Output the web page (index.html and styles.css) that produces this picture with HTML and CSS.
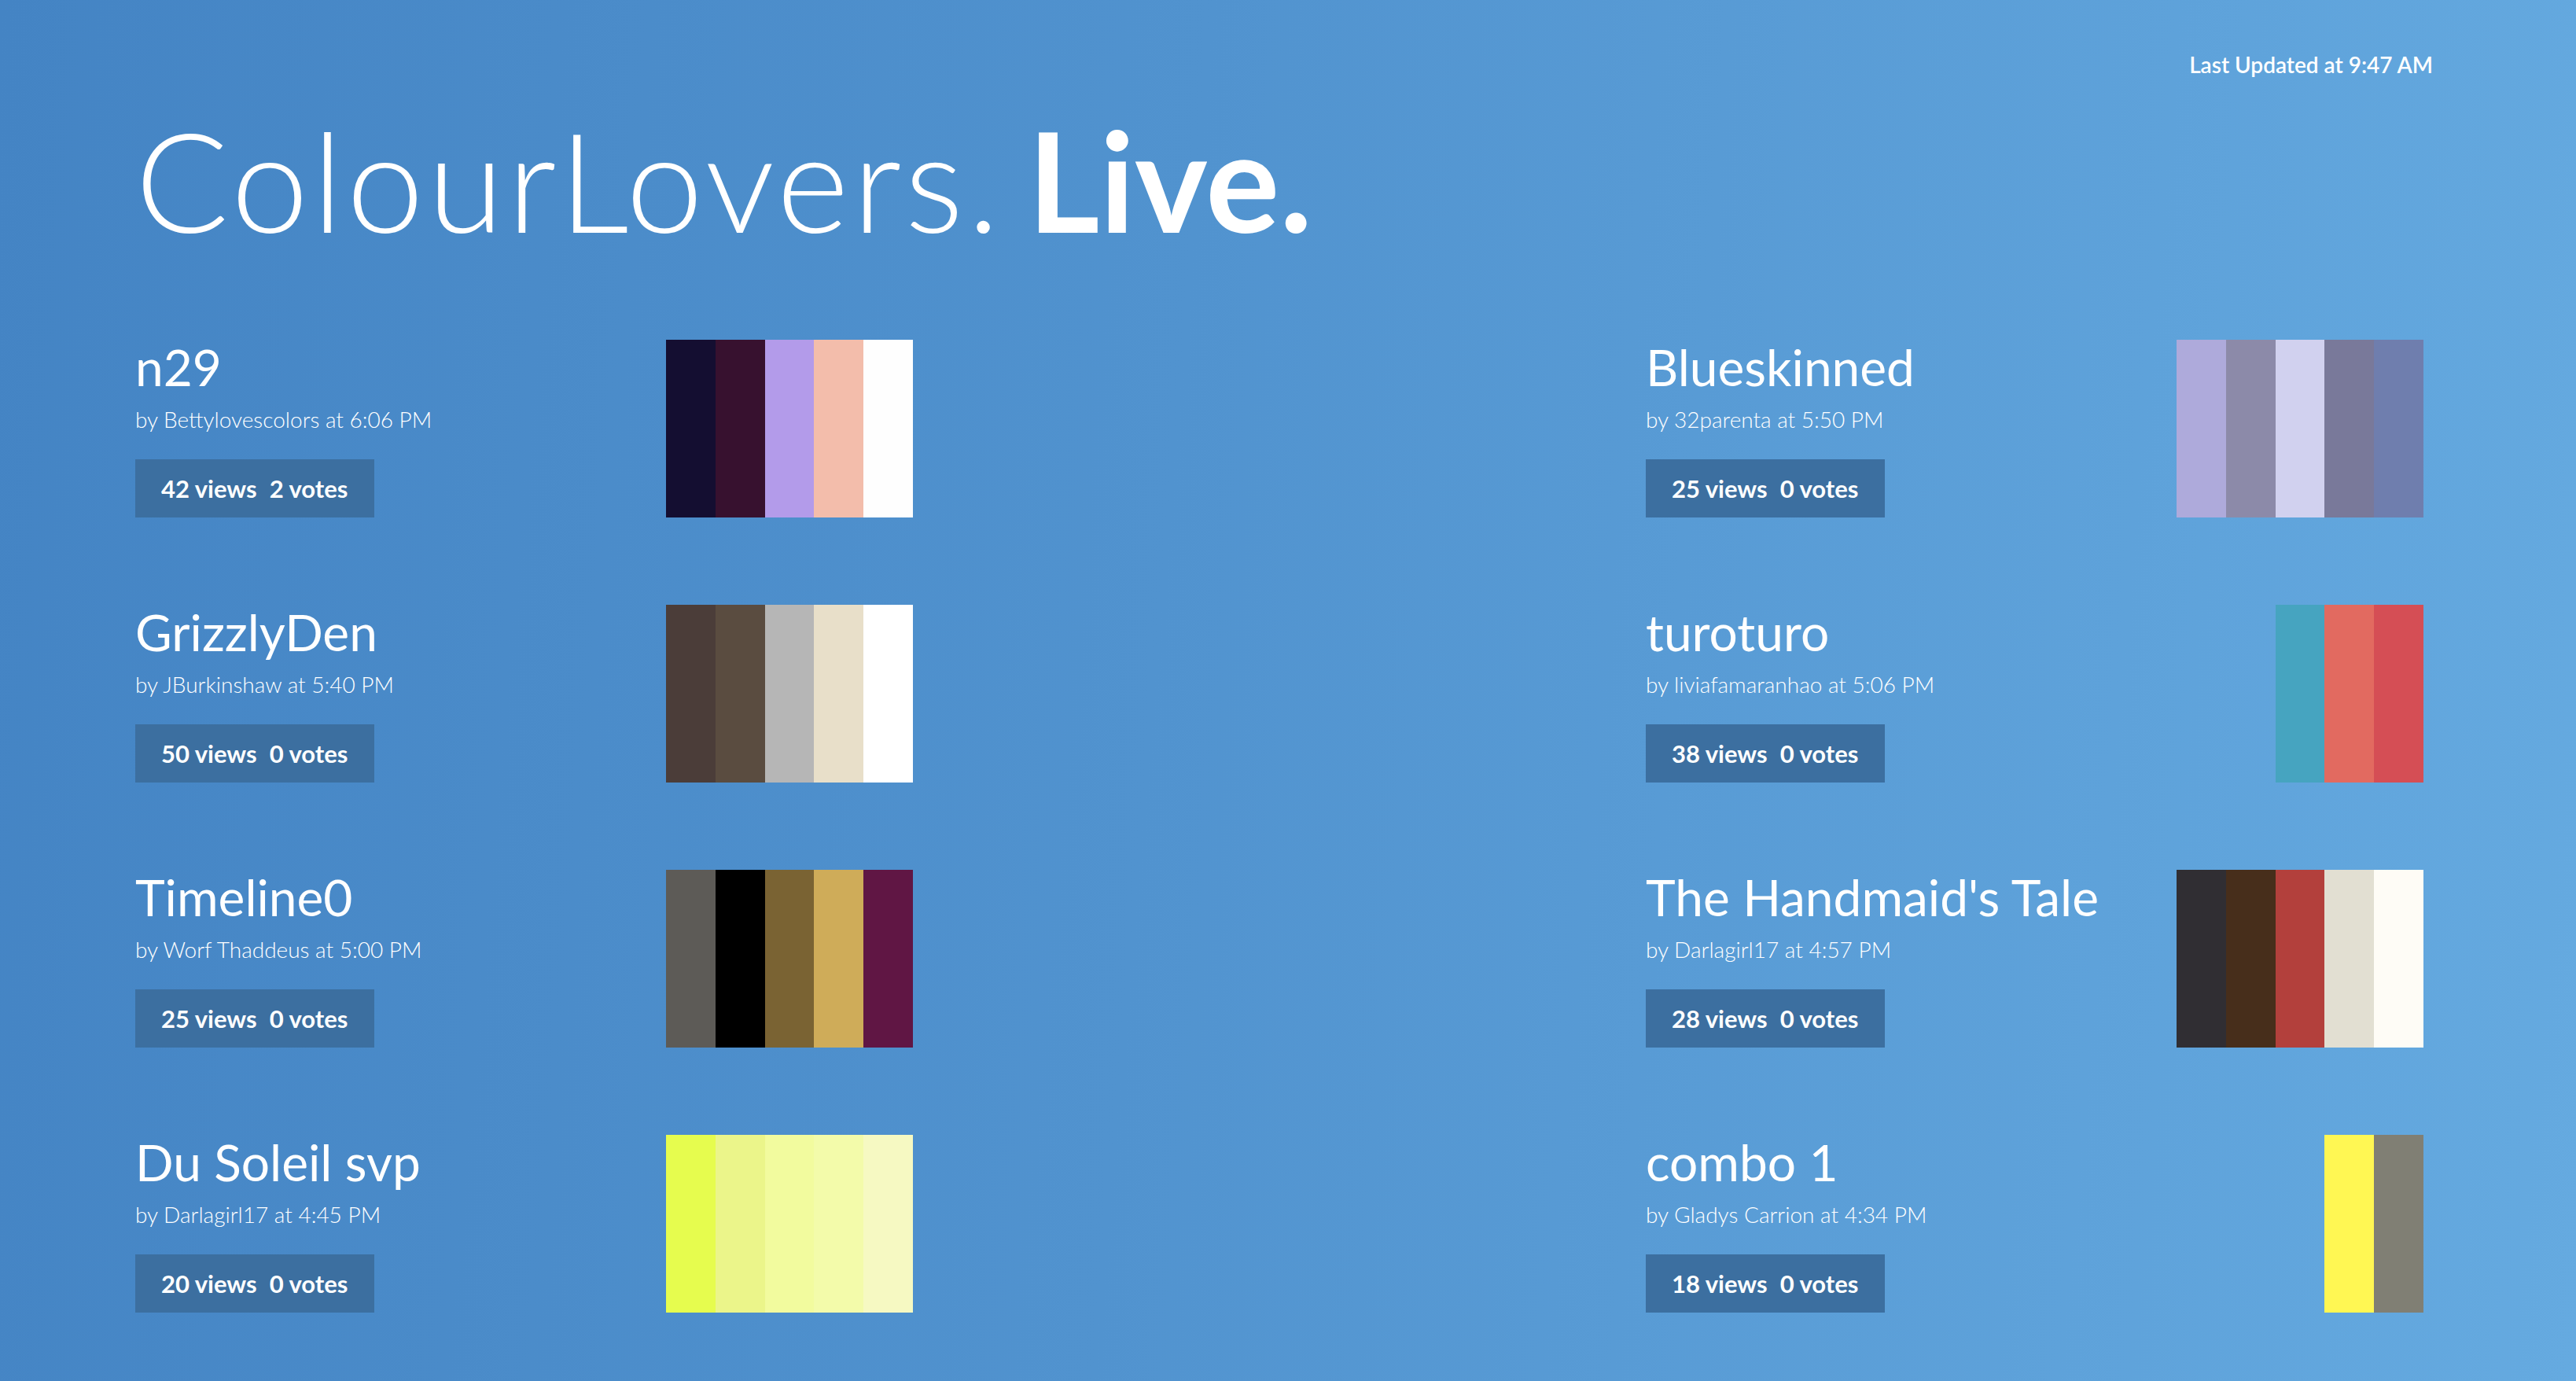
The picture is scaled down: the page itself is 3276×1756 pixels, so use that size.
FILE: index.html
```html
<!DOCTYPE html>
<html lang="en">
<head>
<meta charset="utf-8">
<title>ColourLovers. Live.</title>
<link rel="stylesheet" href="styles.css">
</head>
<body>
  <header class="topbar">
    <span class="updated">Last Updated at 9:47 AM</span>
  </header>
  <main class="page">
    <h1 class="brand"><span class="brand-light">ColourLovers.</span> <span class="brand-bold">Live.</span></h1>
    <section class="grid">
      <article class="card">
        <div class="info">
          <h2 class="name">n29</h2>
          <p class="by">by Bettylovescolors at 6:06 PM</p>
          <div class="stats"><span>42 views</span><span class="votes">2 votes</span></div>
        </div>
        <div class="swatch">
          <span class="c c-n29-1"></span><span class="c c-n29-2"></span><span class="c c-n29-3"></span><span class="c c-n29-4"></span><span class="c c-n29-5"></span>
        </div>
      </article>
      <article class="card">
        <div class="info">
          <h2 class="name">Blueskinned</h2>
          <p class="by">by 32parenta at 5:50 PM</p>
          <div class="stats"><span>25 views</span><span class="votes">0 votes</span></div>
        </div>
        <div class="swatch">
          <span class="c c-blu-1"></span><span class="c c-blu-2"></span><span class="c c-blu-3"></span><span class="c c-blu-4"></span><span class="c c-blu-5"></span>
        </div>
      </article>
      <article class="card">
        <div class="info">
          <h2 class="name">GrizzlyDen</h2>
          <p class="by">by JBurkinshaw at 5:40 PM</p>
          <div class="stats"><span>50 views</span><span class="votes">0 votes</span></div>
        </div>
        <div class="swatch">
          <span class="c c-gri-1"></span><span class="c c-gri-2"></span><span class="c c-gri-3"></span><span class="c c-gri-4"></span><span class="c c-gri-5"></span>
        </div>
      </article>
      <article class="card">
        <div class="info">
          <h2 class="name">turoturo</h2>
          <p class="by">by liviafamaranhao at 5:06 PM</p>
          <div class="stats"><span>38 views</span><span class="votes">0 votes</span></div>
        </div>
        <div class="swatch">
          <span class="c c-tur-1"></span><span class="c c-tur-2"></span><span class="c c-tur-3"></span>
        </div>
      </article>
      <article class="card">
        <div class="info">
          <h2 class="name">Timeline0</h2>
          <p class="by">by Worf Thaddeus at 5:00 PM</p>
          <div class="stats"><span>25 views</span><span class="votes">0 votes</span></div>
        </div>
        <div class="swatch">
          <span class="c c-tim-1"></span><span class="c c-tim-2"></span><span class="c c-tim-3"></span><span class="c c-tim-4"></span><span class="c c-tim-5"></span>
        </div>
      </article>
      <article class="card">
        <div class="info">
          <h2 class="name">The Handmaid's Tale</h2>
          <p class="by">by Darlagirl17 at 4:57 PM</p>
          <div class="stats"><span>28 views</span><span class="votes">0 votes</span></div>
        </div>
        <div class="swatch">
          <span class="c c-han-1"></span><span class="c c-han-2"></span><span class="c c-han-3"></span><span class="c c-han-4"></span><span class="c c-han-5"></span>
        </div>
      </article>
      <article class="card">
        <div class="info">
          <h2 class="name">Du Soleil svp</h2>
          <p class="by">by Darlagirl17 at 4:45 PM</p>
          <div class="stats"><span>20 views</span><span class="votes">0 votes</span></div>
        </div>
        <div class="swatch">
          <span class="c c-sol-1"></span><span class="c c-sol-2"></span><span class="c c-sol-3"></span><span class="c c-sol-4"></span><span class="c c-sol-5"></span>
        </div>
      </article>
      <article class="card">
        <div class="info">
          <h2 class="name">combo 1</h2>
          <p class="by">by Gladys Carrion at 4:34 PM</p>
          <div class="stats"><span>18 views</span><span class="votes">0 votes</span></div>
        </div>
        <div class="swatch">
          <span class="c c-com-1"></span><span class="c c-com-2"></span>
        </div>
      </article>
    </section>
  </main>
</body>
</html>
```
FILE: styles.css
```css
html, body {
  margin: 0;
  padding: 0;
}

body {
  min-height: 100vh;
  background: linear-gradient(95deg, #4484c4 0%, #5193cf 45%, #65aae0 100%);
  color: #ffffff;
  font-family: Lato, "Open Sans", "Liberation Sans", sans-serif;
}

.topbar {
  display: flex;
  justify-content: flex-end;
  padding: 68px 182px 0 0;
}

.updated {
  font-size: 28px;
  line-height: 28px;
  font-weight: 600;
}

.page {
  padding: 0 194px 0 172px;
}

.brand {
  margin: 44px 0 116px 0;
  font-size: 176px;
  line-height: 176px;
  font-weight: 400;
  word-spacing: -14px;
}

.brand-light {
  font-weight: 300;
  letter-spacing: 4.8px;
}

.brand-bold {
  font-weight: 700;
}

.grid {
  display: grid;
  grid-template-columns: 989px 989px;
  justify-content: space-between;
  grid-auto-rows: 226px;
  row-gap: 111px;
}

.card {
  display: flex;
  justify-content: space-between;
  align-items: stretch;
}

.info {
  display: flex;
  flex-direction: column;
  align-items: flex-start;
}

.name {
  margin: 3px 0 0 0;
  font-size: 64px;
  line-height: 64px;
  font-weight: 400;
  white-space: nowrap;
}

.by {
  margin: 22px 0 0 0;
  font-size: 28px;
  line-height: 24px;
  font-weight: 300;
  white-space: nowrap;
}

.stats {
  margin-top: auto;
  display: flex;
  height: 74px;
  align-items: center;
  padding: 0 34px 0 33px;
  background: #3c6fa0;
  font-size: 31px;
  font-weight: 700;
  white-space: nowrap;
}

.votes {
  margin-left: 16px;
}

.swatch {
  display: flex;
  justify-content: flex-end;
  height: 226px;
}

.c {
  display: block;
  width: 62.8px;
  height: 100%;
}

.c-n29-1 { background: #140e31; }
.c-n29-2 { background: #37112f; }
.c-n29-3 { background: #b39bea; }
.c-n29-4 { background: #f3bdab; }
.c-n29-5 { background: #fefefe; }

.c-blu-1 { background: #aeaadb; }
.c-blu-2 { background: #8c8aa9; }
.c-blu-3 { background: #d1d1ef; }
.c-blu-4 { background: #79799a; }
.c-blu-5 { background: #6f7eae; }

.c-gri-1 { background: #4b3d39; }
.c-gri-2 { background: #5a4c40; }
.c-gri-3 { background: #b6b6b6; }
.c-gri-4 { background: #e8dfc9; }
.c-gri-5 { background: #ffffff; }

.c-tur-1 { background: #46a4c0; }
.c-tur-2 { background: #e26a60; }
.c-tur-3 { background: #d54e55; }

.c-tim-1 { background: #5d5b57; }
.c-tim-2 { background: #000000; }
.c-tim-3 { background: #7a6333; }
.c-tim-4 { background: #cfac59; }
.c-tim-5 { background: #601644; }

.c-han-1 { background: #302e33; }
.c-han-2 { background: #472e1b; }
.c-han-3 { background: #b3403c; }
.c-han-4 { background: #e2dfd2; }
.c-han-5 { background: #fefcf6; }

.c-sol-1 { background: #e6fc4e; }
.c-sol-2 { background: #ebf58a; }
.c-sol-3 { background: #f2fb9e; }
.c-sol-4 { background: #f3fbaa; }
.c-sol-5 { background: #f6f9c2; }

.c-com-1 { background: #fff753; }
.c-com-2 { background: #807f74; }
```
